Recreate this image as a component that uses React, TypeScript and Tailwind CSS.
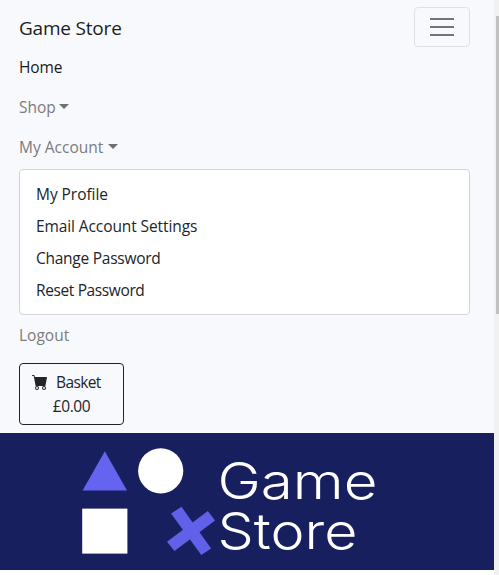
const accountLinks = [
  { label: 'My Profile', spacing: 'tracking-[-0.05px]' },
  { label: 'Email Account Settings', spacing: 'tracking-[-0.1px]' },
  { label: 'Change Password', spacing: 'tracking-[-0.26px]' },
  { label: 'Reset Password', spacing: 'tracking-[-0.38px]' },
];

function Caret() {
  return (
    <span className="mb-[1px] inline-block h-0 w-0 border-x-[5px] border-t-[5px] border-x-transparent border-t-[#6e6f70] align-[3px]" />
  );
}

function Banner() {
  return (
    <svg className="block h-[137px] w-full bg-[#181f5f]" viewBox="0 0 494 137" role="img" aria-label="Game Store">
      <path d="M104.8 18.3 127 57.6H82.6Z" fill="#6464f0" />
      <circle cx="160.7" cy="37.8" r="22.6" fill="#fff" />
      <rect x="82.2" y="75.6" width="45.2" height="45" fill="#fff" />
      <g fill="#6060e8">
        <path d="m171 80.6 10.5-6.8 29.6 41.6-9.8 6.6Z" />
        <path d="m167 108.7 40.8-30.7 7.3 9.6-40.6 30.4Z" />
      </g>
      <g fill="#fff" fontFamily="Inter, sans-serif" fontWeight="300" fontSize="50">
        <text x="217.5" y="65.5" textLength="160" lengthAdjust="spacingAndGlyphs">Game</text>
        <text x="217.5" y="115.5" textLength="140" lengthAdjust="spacingAndGlyphs">Store</text>
      </g>
    </svg>
  );
}

export default function App() {
  return (
    <div className="flex h-[575px] w-[499px] overflow-hidden bg-white font-['Open_Sans','Noto_Sans',sans-serif] text-[15.5px] leading-6 text-[#212529]">
      <main className="w-[494px]">
        <nav className="h-[433px] bg-[#f8f9fc] pl-[19px] pr-6 pt-[7px]">
          <div className="flex h-10 items-center justify-between">
            <a className="pt-0.5 text-[19px] leading-[30px] tracking-[-0.2px] text-[#1c1d1e]">Game Store</a>
            <button className="flex h-10 w-14 flex-col items-center justify-center gap-1.5 rounded border border-[#dfe1e4]" aria-label="Toggle navigation">
              <span className="h-0.5 w-6 bg-[#737475]" />
              <span className="h-0.5 w-6 bg-[#737475]" />
              <span className="h-0.5 w-6 bg-[#737475]" />
            </button>
          </div>
          <div className="flex flex-col text-[#7b7c7d]">
            <a className="py-2 tracking-[-0.1px] text-[#19191a]">Home</a>
            <a className="py-2"><span className="mr-[3px]">Shop</span><Caret /></a>
            <a className="py-2"><span className="mr-[5px]">My Account</span><Caret /></a>
            <div className="mt-0.5 rounded border border-[#d2d4d6] bg-white py-2 text-[#212529]">
              {accountLinks.map((link) => (
                <a key={link.label} className={`block px-4 py-1 ${link.spacing}`}>{link.label}</a>
              ))}
            </div>
            <a className="py-2">Logout</a>
          </div>
          <button className="mt-2 flex h-[62px] w-[105px] flex-col justify-center rounded border border-[#212529] px-3">
            <span className="flex items-center tracking-[-0.6px]">
              <svg className="mr-2 h-4 w-4" viewBox="0 0 16 16" fill="#212529">
                <path d="M0 1.5A.5.5 0 0 1 .5 1H2a.5.5 0 0 1 .485.379L2.89 3H14.5a.5.5 0 0 1 .491.592l-1.5 8A.5.5 0 0 1 13 12H4a.5.5 0 0 1-.491-.408L2.01 3.607 1.61 2H.5a.5.5 0 0 1-.5-.5zM5 12a2 2 0 1 0 0 4 2 2 0 0 0 0-4zm7 0a2 2 0 1 0 0 4 2 2 0 0 0 0-4zm-7 1a1 1 0 1 1 0 2 1 1 0 0 1 0-2zm7 0a1 1 0 1 1 0 2 1 1 0 0 1 0-2z" />
              </svg>
              Basket
            </span>
            <span className="self-center tracking-[-0.4px]">£0.00</span>
          </button>
        </nav>
        <Banner />
      </main>
      <aside className="w-[5px] bg-[#f1f1f1] pl-0.5 pt-4">
        <div className="h-[298px] bg-[#c1c1c1]" />
      </aside>
    </div>
  );
}
